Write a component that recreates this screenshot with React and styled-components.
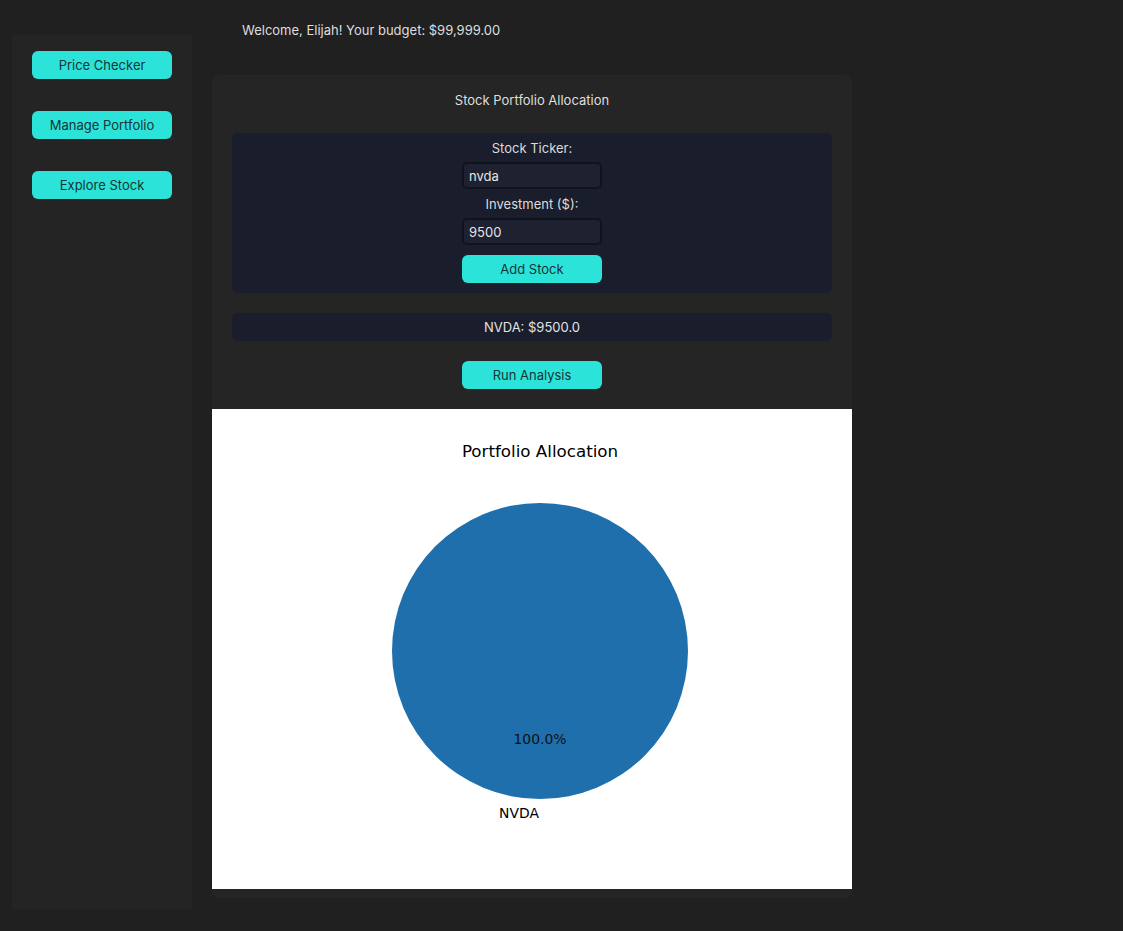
import styled, { createGlobalStyle } from 'styled-components'

const GlobalStyle = createGlobalStyle`
  body {
    margin: 0;
    background: #202020;
    font-family: Inter, 'Noto Sans', 'Liberation Sans', sans-serif;
    font-size: 13px;
    color: #dcdcdc;
  }
`

const Layout = styled.div`
  display: flex;
  gap: 20px;
  padding-left: 12px;
  min-height: 931px;
`

const Sidebar = styled.nav`
  margin-top: 35px;
  width: 180px;
  height: 874px;
  background: #242424;
  display: flex;
  flex-direction: column;
  align-items: center;
  gap: 32px;
  padding-top: 16px;
  box-sizing: border-box;
`

const Button = styled.button`
  width: 140px;
  height: 28px;
  border: none;
  border-radius: 6px;
  background: #2ce3da;
  color: #173534;
  font-family: inherit;
  font-size: 13px;
  cursor: pointer;
  padding: 0;
  margin-bottom: ${({ $mb }) => $mb || 0}px;
`

const Main = styled.main`
  width: 640px;
  display: flex;
  flex-direction: column;
`

const Welcome = styled.div`
  padding: 22px 0 0 30px;
  height: 75px;
  box-sizing: border-box;
  color: #dedede;
`

const Panel = styled.section`
  background: #252525;
  border-radius: 6px;
  display: flex;
  flex-direction: column;
  align-items: center;
  padding: 17px 0 9px;
`

const Title = styled.div`
  line-height: 16px;
  margin-bottom: 25px;
  color: #dedede;
`

const Card = styled.div`
  width: 600px;
  background: #1a1d2b;
  border-radius: 6px;
  display: flex;
  flex-direction: column;
  align-items: center;
  padding: ${({ $form }) => ($form ? '7px 0 10px' : '0')};
  height: ${({ $form }) => ($form ? 'auto' : '28px')};
  justify-content: center;
  box-sizing: border-box;
  margin-bottom: 20px;
`

const Label = styled.label`
  line-height: 16px;
  margin-bottom: 6px;
  color: #dcdcdc;
`

const Input = styled.input`
  width: 140px;
  height: 27px;
  box-sizing: border-box;
  background: #1e2130;
  border: 2px solid #11131c;
  border-radius: 5px;
  color: #e4e4e4;
  font-family: inherit;
  font-size: 13px;
  padding: 0 5px;
  margin-bottom: ${({ $mb }) => $mb}px;
  outline: none;
  caret-color: #e4e4e4;
`

const Holding = styled.div`
  color: #e2e2e2;
`

const Chart = styled.svg`
  display: block;
  background: #fff;
`

function PieChart() {
  return (
    <Chart width="640" height="480" viewBox="0 0 640 480">
      <g fontFamily="'DejaVu Sans', sans-serif">
        <text x="328" y="48" fontSize="16.7" textAnchor="middle" fill="#000">
          Portfolio Allocation
        </text>
        <circle cx="328" cy="242" r="148" fill="#1f6fad" />
        <text x="328" y="335" fontSize="13.9" textAnchor="middle" fill="#111">
          100.0%
        </text>
        <text x="307" y="409" fontSize="13.9" textAnchor="middle" fill="#000">
          NVDA
        </text>
      </g>
    </Chart>
  )
}

export default function App() {
  return (
    <>
      <GlobalStyle />
      <Layout>
        <Sidebar>
          <Button>Price Checker</Button>
          <Button>Manage Portfolio</Button>
          <Button>Explore Stock</Button>
        </Sidebar>
        <Main>
          <Welcome>Welcome, Elijah! Your budget: $99,999.00</Welcome>
          <Panel>
            <Title>Stock Portfolio Allocation</Title>
            <Card $form>
              <Label>Stock Ticker:</Label>
              <Input defaultValue="nvda" $mb={7} autoFocus />
              <Label>Investment ($):</Label>
              <Input defaultValue="9500" $mb={10} />
              <Button>Add Stock</Button>
            </Card>
            <Card>
              <Holding>NVDA: $9500.0</Holding>
            </Card>
            <Button $mb={20}>Run Analysis</Button>
            <PieChart />
          </Panel>
        </Main>
      </Layout>
    </>
  )
}
